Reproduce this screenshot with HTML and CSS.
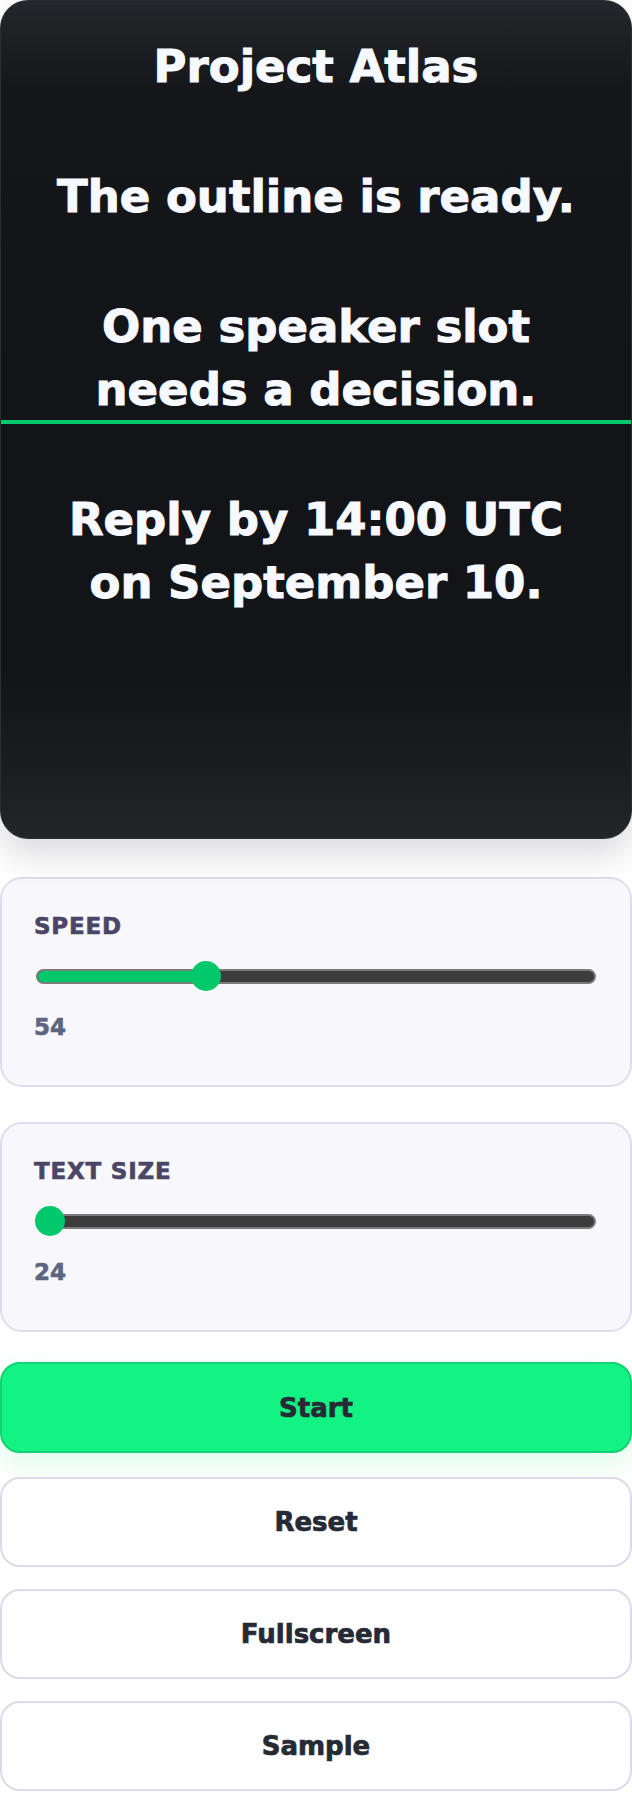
FILE: index.html
```html
<!DOCTYPE html>
<html lang="en">
<head>
<meta charset="utf-8">
<title>Project Atlas – Teleprompter</title>
<link rel="stylesheet" href="styles.css">
</head>
<body>
<main class="app">
  <section class="prompter">
    <div class="script">
      <p class="line">Project Atlas</p>
      <p class="line">The outline is ready.</p>
      <p class="line">One speaker slot needs a decision.</p>
      <p class="line">Reply by 14:00 UTC on September 10.</p>
    </div>
    <div class="marker"></div>
  </section>

  <section class="control control-speed">
    <div class="label">SPEED</div>
    <div class="slider">
      <div class="track" style="--p: 0.294">
        <div class="fill"></div>
        <div class="thumb"></div>
      </div>
    </div>
    <div class="value">54</div>
  </section>

  <section class="control control-size">
    <div class="label">TEXT SIZE</div>
    <div class="slider">
      <div class="track" style="--p: 0">
        <div class="fill"></div>
        <div class="thumb"></div>
      </div>
    </div>
    <div class="value">24</div>
  </section>

  <div class="actions">
    <button class="btn btn-primary">Start</button>
    <button class="btn">Reset</button>
    <button class="btn">Fullscreen</button>
    <button class="btn">Sample</button>
  </div>
</main>
</body>
</html>
```

FILE: styles.css
```css
html, body {
  margin: 0;
  padding: 0;
  background: #ffffff;
}

body {
  font-family: "DejaVu Sans", "Liberation Sans", sans-serif;
  font-weight: 700;
}

.app {
  width: 632px;
  display: flex;
  flex-direction: column;
}

/* ---------- Prompter ---------- */
.prompter {
  position: relative;
  height: 839px;
  box-sizing: border-box;
  border: 1px solid #2c2d32;
  border-radius: 28px;
  overflow: hidden;
  background: linear-gradient(180deg,
    #25262b 0%,
    #15161a 11%,
    #131418 50%,
    #131418 80%,
    #1b1c20 91%,
    #242529 100%);
  box-shadow: 0 16px 34px rgba(30, 30, 50, 0.16);
}

.script {
  padding: 34px 36px 0;
  text-align: center;
  color: #f6f9ff;
  font-size: 45px;
  line-height: 63px;
  font-weight: 700;
  -webkit-text-stroke: 1px #f6f9ff;
}

.line {
  margin: 0 0 67px;
}

.marker {
  position: absolute;
  left: 0;
  right: 0;
  top: 419px;
  height: 4px;
  background: #00c86b;
}

/* ---------- Controls ---------- */
.control {
  box-sizing: border-box;
  border: 2px solid #dfdded;
  border-radius: 22px;
  background: #f7f7fc;
  padding: 33px 32px 44px;
}

.control-speed {
  margin-top: 38px;
}

.control-size {
  margin-top: 35px;
}

.label {
  font-size: 23px;
  line-height: 28px;
  letter-spacing: 0.8px;
  color: #4b4566;
  -webkit-text-stroke: 0.6px #4b4566;
}

.slider {
  display: flex;
  align-items: center;
  height: 30px;
  margin: 21px 2px 0;
}

.track {
  position: relative;
  flex: 1;
  height: 15px;
  box-sizing: border-box;
  border: 2px solid #7b7b7b;
  border-radius: 8px;
  background: #3c3c3c;
}

.fill {
  position: absolute;
  left: 0;
  top: 0;
  bottom: 0;
  width: calc(12px + var(--p) * (100% - 24px));
  background: #00c86b;
  border-radius: 6px;
}

.thumb {
  position: absolute;
  top: 50%;
  left: calc(12px + var(--p) * (100% - 24px));
  width: 30px;
  height: 30px;
  margin: -15px 0 0 -15px;
  border-radius: 50%;
  background: #00c86b;
}

.value {
  margin-top: 22px;
  font-size: 23px;
  line-height: 28px;
  color: #5d6680;
  -webkit-text-stroke: 0.6px #5d6680;
}

/* ---------- Buttons ---------- */
.actions {
  margin-top: 30px;
  display: flex;
  flex-direction: column;
  gap: 22px;
}

.btn {
  display: block;
  width: 100%;
  height: 90px;
  box-sizing: border-box;
  padding: 0;
  border: 2px solid #dddbe9;
  border-radius: 20px;
  background: #ffffff;
  font-family: "DejaVu Sans", "Liberation Sans", sans-serif;
  font-weight: 700;
  font-size: 26px;
  color: #262a35;
  -webkit-text-stroke: 0.7px #262a35;
  cursor: pointer;
}

.btn-primary {
  height: 91px;
  margin-bottom: 2px;
  background: #12f383;
  border-color: #10d273;
  box-shadow: 0 12px 30px rgba(18, 220, 120, 0.14);
}
```
